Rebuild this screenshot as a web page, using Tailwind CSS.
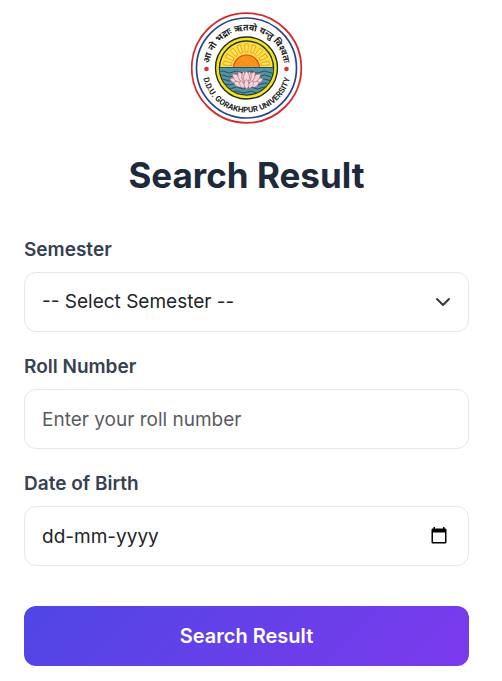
<!DOCTYPE html>
<html lang="en">
<head>
<meta charset="utf-8">
<meta name="viewport" content="width=device-width, initial-scale=1">
<title>Search Result</title>
<script src="https://cdn.jsdelivr.net/npm/@tailwindcss/browser@4"></script>
</head>
<body class="bg-white font-['Inter',sans-serif] text-[#1e293b]">
<main class="pt-3 pb-4 pl-6 pr-[33px]">
  <svg class="mx-auto block size-28" viewBox="0 0 112 112" role="img" aria-label="D.D.U. Gorakhpur University">
    <defs>
      <path id="top" d="M18 56a37.500 37.500 0 0 1 75 0"/>
      <path id="bottom" d="M11 56a44.500 44.500 0 0 0 89 0"/>
      <clipPath id="disc"><circle cx="55.500" cy="56" r="26.500"/></clipPath>
      <path id="petal" d="M0 0C-5-4-4.500-9 0-14C4.500-9 5-4 0 0Z"/>
      <path id="ray" d="M-1.300-15L-1.800-23H1.800L1.300-15Z"/>
    </defs>
    <circle cx="55.500" cy="56" r="54.800" fill="#fff" stroke="#d52b2b" stroke-width="1.800"/>
    <circle cx="55.500" cy="56" r="50" fill="none" stroke="#27458f" stroke-width="1.700"/>
    <circle cx="55.500" cy="56" r="31" fill="#f5e51f" stroke="#222b22" stroke-width="1.400"/>
    <circle cx="55.500" cy="56" r="27" fill="#fbdf3a" stroke="#283330" stroke-width="1.400"/>
    <g clip-path="url(#disc)">
      <g transform="translate(55.500 55)" fill="#fdeb62" stroke="#ee9a2c" stroke-width=".9">
        <use href="#ray" transform="rotate(-80)"/><use href="#ray" transform="rotate(-60)"/><use href="#ray" transform="rotate(-40)"/><use href="#ray" transform="rotate(-20)"/><use href="#ray"/><use href="#ray" transform="rotate(20)"/><use href="#ray" transform="rotate(40)"/><use href="#ray" transform="rotate(60)"/><use href="#ray" transform="rotate(80)"/>
      </g>
      <circle cx="55.500" cy="56" r="13" fill="#f6921e" stroke="#d4472b" stroke-width="1.200"/>
      <path d="M28 55H84V84H28Z" fill="#4f93a5"/>
      <path d="M28 55.500H84M28 60q3.500-2 7 0t7 0t7 0t7 0t7 0t7 0t7 0t7 0M28 64q3.500-2 7 0t7 0t7 0t7 0t7 0t7 0t7 0t7 0M28 68q3.500-2 7 0t7 0t7 0t7 0t7 0t7 0t7 0t7 0M28 72q3.500-2 7 0t7 0t7 0t7 0t7 0t7 0t7 0t7 0M28 76q3.500-2 7 0t7 0t7 0t7 0t7 0t7 0t7 0t7 0M28 80q3.500-2 7 0t7 0t7 0t7 0t7 0t7 0t7 0t7 0" fill="none" stroke="#2a525d" stroke-width="1"/>
      <g transform="translate(55.500 71) scale(.86)" fill="#f6d5d9" stroke="#a0606d" stroke-width=".7">
        <use href="#petal" transform="translate(-5 0) rotate(-72) scale(1 1.100)"/><use href="#petal" transform="translate(5 0) rotate(72) scale(1 1.100)"/>
        <use href="#petal" transform="translate(-4 0) rotate(-50) scale(1 1.200)"/><use href="#petal" transform="translate(4 0) rotate(50) scale(1 1.200)"/>
        <use href="#petal" transform="translate(-2 0) rotate(-30) scale(1 1.100)"/><use href="#petal" transform="translate(2 0) rotate(30) scale(1 1.100)"/>
        <use href="#petal" transform="rotate(-16)"/><use href="#petal" transform="rotate(16)"/><use href="#petal"/>
        <use href="#petal" transform="translate(-5 4) rotate(-62) scale(.8 .8)"/><use href="#petal" transform="translate(5 4) rotate(62) scale(.8 .8)"/>
        <use href="#petal" transform="translate(-3 6) rotate(-28) scale(.7 .7)"/><use href="#petal" transform="translate(3 6) rotate(28) scale(.7 .7)"/><use href="#petal" transform="translate(0 7) scale(.8 .8)"/>
      </g>
    </g>
    <circle cx="15.500" cy="57" r="2.300" fill="#e12c30"/><circle cx="95.500" cy="57" r="2.300" fill="#e12c30"/>
    <text class="font-['Noto_Sans',sans-serif] text-[9px] font-bold" fill="#242424" text-anchor="middle"><textPath href="#top" startOffset="50%">आ नो भद्राः ऋतवो यन्तु विश्वतः</textPath></text>
    <text class="font-['Liberation_Sans_Narrow','Roboto',sans-serif] text-[8px] font-bold" fill="#242424" text-anchor="middle"><textPath href="#bottom" startOffset="50%">D.D.U. GORAKHPUR UNIVERSITY</textPath></text>
  </svg>

  <h1 class="mt-[27px] text-center text-[35px] leading-12 font-bold">Search Result</h1>

  <form class="mt-[39px]">
    <label for="semester" class="block text-[19px] leading-6 font-semibold text-[#374151]">Semester</label>
    <div class="relative mt-[10px]">
      <select id="semester" class="block h-15 w-full appearance-none rounded-xl border border-[#e2e8f0] bg-white px-[17px] text-[19px] text-[#212529]">
        <option>-- Select Semester --</option>
      </select>
      <svg class="pointer-events-none absolute inset-y-0 right-[18px] my-auto size-4" viewBox="0 0 16 16" fill="none" stroke="#343a40" stroke-width="2" stroke-linecap="round" stroke-linejoin="round" aria-hidden="true"><path d="m2 5 6 6 6-6"/></svg>
    </div>

    <label for="roll" class="mt-[23px] block text-[19px] leading-6 font-semibold text-[#374151]">Roll Number</label>
    <input id="roll" type="text" placeholder="Enter your roll number" class="mt-[10px] block h-15 w-full rounded-xl border border-[#e2e8f0] bg-white px-[17px] text-[19px] text-[#212529] placeholder:text-[#595c5f]">

    <label for="dob" class="mt-[23px] block text-[19px] leading-6 font-semibold text-[#374151]">Date of Birth</label>
    <div class="relative mt-[10px]">
      <input id="dob" type="text" placeholder="dd-mm-yyyy" class="block h-15 w-full rounded-xl border border-[#e2e8f0] bg-white px-[17px] text-[19px] text-[#212529] placeholder:text-[#212529]">
      <button type="button" aria-label="Choose date" class="absolute inset-y-0 right-5 my-auto size-5">
        <svg class="size-5" viewBox="0 0 20 20" aria-hidden="true"><path fill="#000" fill-rule="evenodd" d="M4.500 1H6v1.500h8V1h1.500v1.500h.7c.7 0 1.300.6 1.300 1.300v12.400c0 .7-.6 1.300-1.300 1.300H3.800c-.7 0-1.300-.6-1.300-1.300V3.800c0-.7.6-1.300 1.300-1.300h.7ZM4 6.500V16h12V6.500Z"/></svg>
      </button>
    </div>

    <button type="submit" class="mt-10 block h-15 w-full rounded-xl bg-[linear-gradient(135deg,#4f46e5,#7c3aed)] text-[20px] font-semibold text-white">Search Result</button>
  </form>
</main>
</body>
</html>
